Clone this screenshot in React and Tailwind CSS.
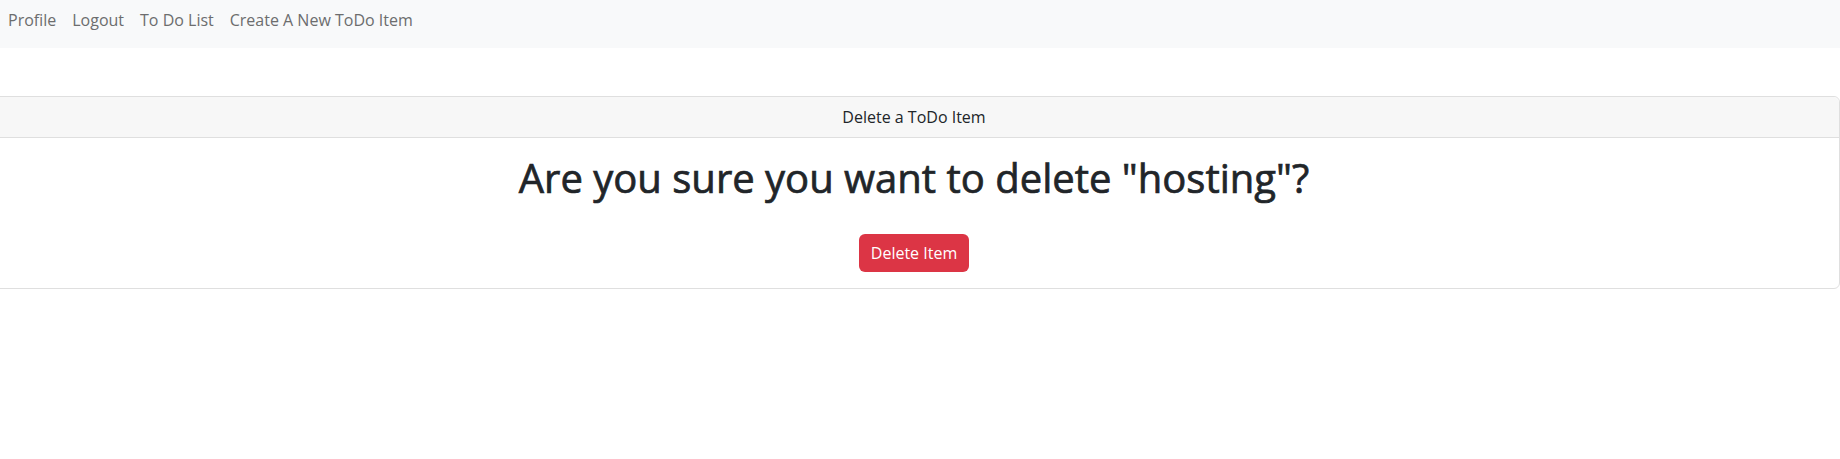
import React from 'react';

const navLinks = ['Profile', 'Logout', 'To Do List', 'Create A New ToDo Item'];

const App = () => {
  return (
    <div className="min-h-[459px] bg-white text-[#212529] font-['Open_Sans',sans-serif] overflow-hidden">
      {/* Navbar */}
      <nav className="h-[48px] bg-[#f8f9fa] flex items-start pt-[8px]">
        {navLinks.map((link) => (
          <a key={link} href="#" className="px-[8px] text-[16px] leading-[24px] text-[#6c6d6e]">
            {link}
          </a>
        ))}
      </nav>

      {/* Delete card */}
      <div className="mt-[48px] -ml-[12px] border border-[#dfdfdf] rounded-[6px] bg-white">
        <div className="bg-[#f7f7f7] border-b border-[#dfdfdf] rounded-t-[6px] py-[8px] px-[16px] text-center text-[16px] leading-[24px]">
          Delete a ToDo Item
        </div>
        <div className="p-[16px] text-center">
          <h1 className="text-[40px] leading-[48px] font-medium [-webkit-text-stroke:0.7px_currentColor] mb-[32px]">
            Are you sure you want to delete "hosting"?
          </h1>
          <button className="h-[38px] px-[12px] bg-[#dc3545] text-white text-[16px] leading-[24px] rounded-[6px]">
            Delete Item
          </button>
        </div>
      </div>
    </div>
  );
};

export default App;
